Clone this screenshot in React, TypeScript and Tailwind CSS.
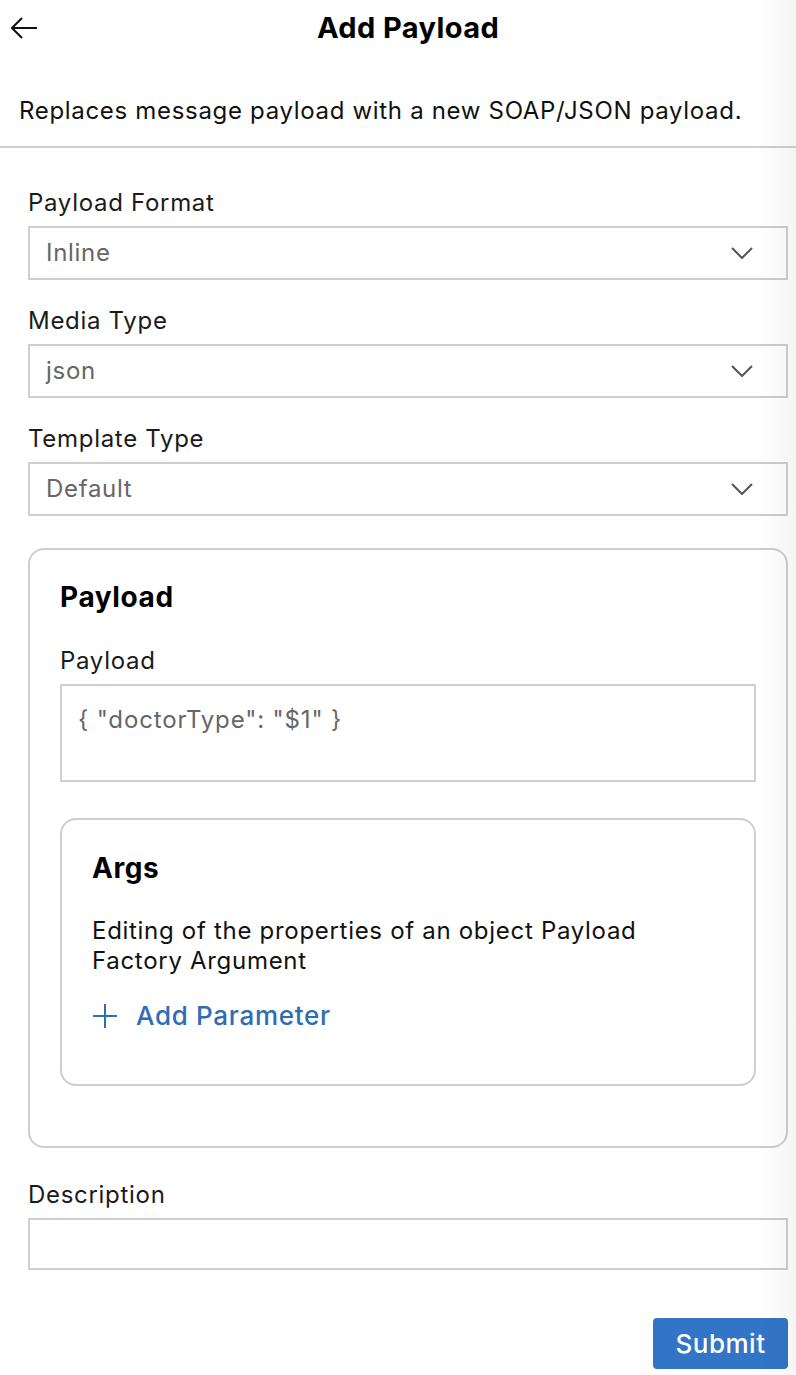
import React from "react";

const font = { fontFamily: "Inter, 'Noto Sans', sans-serif" };

function Chevron() {
  return (
    <svg width="22" height="12" viewBox="0 0 22 12" fill="none">
      <polyline points="1,1 11,11 21,1" stroke="#555" strokeWidth="2" fill="none" />
    </svg>
  );
}

function Select({ value }: { value: string }) {
  return (
    <div className="flex h-[54px] items-center justify-between border-2 border-[#cecece] bg-white pl-[16px] pr-[33px]">
      <span className="text-[24px] leading-[30px] tracking-[0.7px] text-[#666]">{value}</span>
      <Chevron />
    </div>
  );
}

function Label({ children }: { children: React.ReactNode }) {
  return <div className="mb-[8px] text-[24px] leading-[30px] tracking-[0.7px] text-[#1b1b1b]">{children}</div>;
}

export default function App() {
  return (
    <div className="relative min-h-[1375px] w-[796px] bg-white text-black" style={font}>
      <div className="relative flex h-[56px] items-center justify-center pl-[20px]">
        <svg className="absolute left-[11px] top-[17px]" width="28" height="22" viewBox="0 0 28 22" fill="none">
          <polyline points="11,1 1,11 11,21" stroke="#111" strokeWidth="2" fill="none" />
          <line x1="1" y1="11" x2="26" y2="11" stroke="#111" strokeWidth="2" />
        </svg>
        <h1 className="text-[29px] font-bold leading-[34px] tracking-[0.4px]">Add Payload</h1>
      </div>
      <p className="px-[19px] pb-[20px] pt-[40px] text-[24px] leading-[30px] tracking-[0.68px] text-[#111]">
        Replaces message payload with a new SOAP/JSON payload.
      </p>
      <div className="h-[2px] bg-[#cfcfcf]" />
      <div className="pl-[28px] pr-[8px] pt-[40px] pb-[8px]">
        <Label>Payload Format</Label>
        <Select value="Inline" />
        <div className="h-[26px]" />
        <Label>Media Type</Label>
        <Select value="json" />
        <div className="h-[26px]" />
        <Label>Template Type</Label>
        <Select value="Default" />

        <div className="mt-[32px] rounded-[16px] border-2 border-[#cecece] px-[30px] pb-[60px] pt-[30px]">
          <h2 className="text-[28px] font-bold leading-[34px] tracking-[0.6px]">Payload</h2>
          <div className="mt-[32px]">
            <Label>Payload</Label>
          </div>
          <div className="h-[98px] border-2 border-[#cecece] px-[16px] pt-[19px] text-[24px] leading-[30px] tracking-[0.85px] text-[#666]">
            {'{ "doctorType": "$1" }'}
          </div>
          <div className="mt-[36px] h-[268px] rounded-[16px] border-2 border-[#cecece] px-[30px] pt-[31px]">
            <h3 className="text-[28px] font-bold leading-[34px] tracking-[0.6px]">Args</h3>
            <p className="mt-[31px] text-[24px] leading-[30px] tracking-[0.7px] text-[#111]">
              Editing of the properties of an object Payload Factory Argument
            </p>
            <div className="mt-[25px] flex items-center gap-[18px] text-[#2e6db4]">
              <svg width="26" height="26" viewBox="0 0 26 26" fill="none">
                <line x1="13" y1="1" x2="13" y2="25" stroke="#2e6db4" strokeWidth="2" />
                <line x1="1" y1="13" x2="25" y2="13" stroke="#2e6db4" strokeWidth="2" />
              </svg>
              <span className="text-[26px] font-medium leading-[30px] tracking-[0.7px]">Add Parameter</span>
            </div>
          </div>
        </div>

        <div className="mt-[32px]">
          <Label>Description</Label>
        </div>
        <div className="h-[52px] border-2 border-[#cecece]" />
        <div className="mt-[48px] flex justify-end">
          <button className="h-[51px] w-[135px] rounded-[4px] bg-[#3275c6] text-[26px] font-medium tracking-[0.5px] text-white">
            Submit
          </button>
        </div>
      </div>
      <div className="pointer-events-none absolute right-0 top-0 h-full w-[40px] bg-gradient-to-r from-transparent to-[rgba(0,0,0,0.04)]" />
    </div>
  );
}
